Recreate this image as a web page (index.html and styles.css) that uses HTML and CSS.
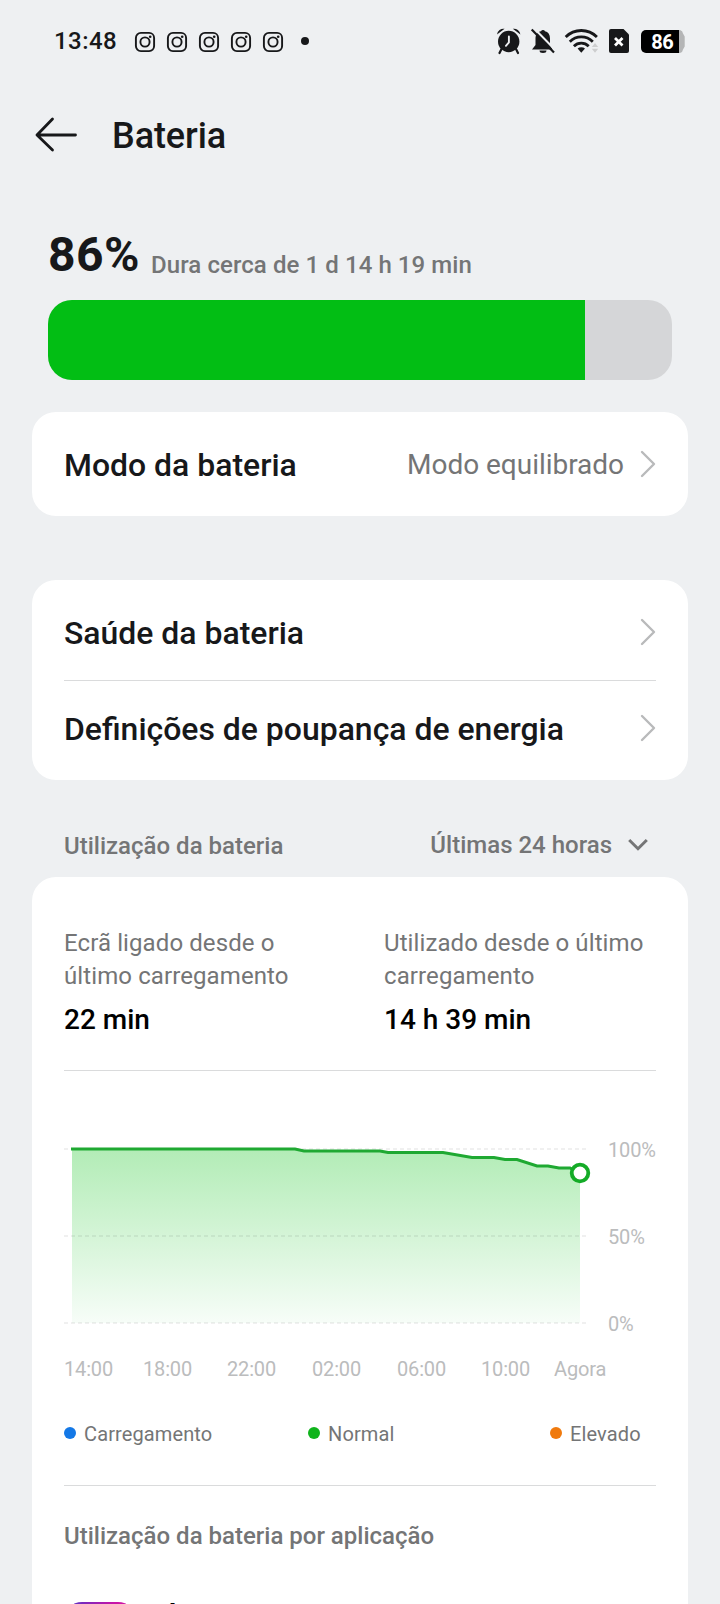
FILE: index.html
```html
<!DOCTYPE html>
<html lang="pt">
<head>
<meta charset="utf-8">
<title>Bateria</title>
<link rel="stylesheet" href="styles.css">
</head>
<body>
<svg width="0" height="0" class="defs">
  <symbol id="insta" viewBox="0 0 22 22"><rect x="1.9" y="1.9" width="18.2" height="18.2" rx="5" fill="none" stroke="#17181a" stroke-width="1.9"/><circle cx="11" cy="11" r="4.6" fill="none" stroke="#17181a" stroke-width="1.9"/><circle cx="16.2" cy="5.8" r="1.3" fill="#17181a"/></symbol>
  <symbol id="chev" viewBox="0 0 16 28"><path d="M2 2 14 14 2 26" fill="none" stroke="#b9babb" stroke-width="2.4" stroke-linecap="round" stroke-linejoin="round"/></symbol>
</svg>
<div class="screen">
  <div class="status">
    <span class="clock">13:48</span>
    <div class="notifs">
      <svg><use href="#insta"/></svg><svg><use href="#insta"/></svg><svg><use href="#insta"/></svg><svg><use href="#insta"/></svg><svg><use href="#insta"/></svg>
    </div>
    <span class="more"></span>
    <svg class="sys" width="192" height="32" viewBox="494 25 192 32">
      <!-- alarm -->
      <g fill="#17181a">
        <circle cx="508.700" cy="41.500" r="10.700"/>
        <path d="M497 34.500a6.500 6.500 0 0 1 7.600-5.700zM520.400 34.500a6.500 6.500 0 0 0-7.600-5.700z"/>
        <path d="M501.500 49l-2 4M516 49l2 4" stroke="#17181a" stroke-width="2.200" stroke-linecap="round"/>
        <path d="M508.900 36.500v6l-3 3.300" fill="none" stroke="#eef0f2" stroke-width="1.900" stroke-linecap="round"/>
      </g>
      <!-- muted bell -->
      <g fill="#17181a">
        <path d="M532 49.500h20.500l-2.500-4.500v-6.500c0-4-2-6.500-5-7.200a2.200 2.200 0 0 0-4 0c-3.200.7-5.500 3.200-5.500 7.200V45zM539.500 50.500h7a3.500 2.500 0 0 1-7 0z"/>
        <path d="M533.500 27.800l22.500 23" stroke="#eef0f2" stroke-width="2"/>
        <path d="M531.700 29.600l22.300 22.800" stroke="#17181a" stroke-width="2.200"/>
      </g>
      <!-- wifi -->
      <g fill="none" stroke="#17181a" stroke-width="2.800">
        <path d="M565.700 37a22 22 0 0 1 31.200 0"/>
        <path d="M569.800 41.700a16.300 16.300 0 0 1 23 0"/>
        <path d="M573.900 46.200a10.600 10.600 0 0 1 14.800 0"/>
        <path d="M581.300 52.700l-3.700-4.100a5.500 5.500 0 0 1 7.400 0z" fill="#17181a" stroke="none"/>
      </g>
      <path d="M591.800 47l3.200-4 3.200 4zM591.800 48.700l3.200 4 3.200-4z" fill="#cdcecf"/>
      <!-- SIM without service -->
      <path d="M611 29h12.500l5.500 5.500V51a2 2 0 0 1-2 2h-16a2 2 0 0 1-2-2V31a2 2 0 0 1 2-2z" fill="#17181a"/>
      <path d="M615 38l7.500 7.500M622.500 38l-7.500 7.500" stroke="#fff" stroke-width="2.800"/>
      <!-- battery -->
      <path d="M679 30h1a4 4 0 0 1 3 3.500l1.700 3v10l-1.700 3a4 4 0 0 1-3 3.500h-1z" fill="#b4b5b6"/>
      <path d="M646 30h33v23h-33a5 5 0 0 1-5-5V35a5 5 0 0 1 5-5z" fill="#000"/>
      <text x="662.300" y="48.900" class="batt">86</text>
    </svg>
  </div>

  <header class="bar">
    <svg width="44" height="36" viewBox="0 0 44 36"><path d="M40.500 18H2M17.500 2 2 18 17.500 33" fill="none" stroke="#17181a" stroke-width="2.800" stroke-linecap="round" stroke-linejoin="round"/></svg>
    <h1>Bateria</h1>
  </header>

  <section class="level">
    <div class="level-text"><strong>86%</strong><span>Dura cerca de 1 d 14 h 19 min</span></div>
    <div class="meter"><div class="meter-fill" style="width:86%"></div></div>
  </section>

  <section class="card mode">
    <div class="row"><span class="name">Modo da bateria</span><span class="value">Modo equilibrado</span><svg class="chev"><use href="#chev"/></svg></div>
  </section>

  <section class="card links">
    <div class="row"><span class="name">Saúde da bateria</span><svg class="chev"><use href="#chev"/></svg></div>
    <div class="row"><span class="name">Definições de poupança de energia</span><svg class="chev"><use href="#chev"/></svg></div>
  </section>

  <div class="section-head">
    <span class="usage-title">Utilização da bateria</span>
    <span class="range">Últimas 24 horas</span>
    <svg width="22" height="16" viewBox="0 0 22 16"><path d="M2.200 3 11 11.700 19.800 3" fill="none" stroke="#747576" stroke-width="3"/></svg>
  </div>

  <section class="card usage">
    <div class="stats">
      <div><p>Ecrã ligado desde o<br>último carregamento</p><b>22 min</b></div>
      <div><p>Utilizado desde o último<br>carregamento</p><b>14 h 39 min</b></div>
    </div>
    <svg class="chart" width="624" height="320" viewBox="64 1071 624 320">
      <defs><linearGradient id="fill" x1="0" y1="1149" x2="0" y2="1323" gradientUnits="userSpaceOnUse"><stop offset="0" stop-color="#b2ecb6"/><stop offset="1" stop-color="#f7fdf8"/></linearGradient></defs>
      <path d="M72 1149H295L304 1151H380L388 1152.500H443L472 1157.500H494L505 1159.500H517L537 1166H548L559 1168H570L580 1173V1323H72z" fill="url(#fill)"/>
      <path d="M64 1149H587M64 1236H587M64 1323H587" stroke="#000" stroke-opacity=".06" stroke-width="1.800" stroke-dasharray="4 3"/>
      <path d="M71 1149H295L304 1151H380L388 1152.500H443L472 1157.500H494L505 1159.500H517L537 1166H548L559 1168H570L580 1173" fill="none" stroke="#1fa932" stroke-width="3"/>
      <circle cx="580" cy="1173" r="8.300" fill="#fff" stroke="#14ab27" stroke-width="3.800"/>
      <g class="axis">
        <text x="608" y="1157">100%</text><text x="608" y="1244">50%</text><text x="608" y="1331">0%</text>
        <text x="64" y="1376">14:00</text><text x="143" y="1376">18:00</text><text x="227" y="1376">22:00</text><text x="312" y="1376">02:00</text><text x="397" y="1376">06:00</text><text x="481" y="1376">10:00</text><text x="554" y="1376">Agora</text>
      </g>
    </svg>
    <div class="legend">
      <span class="blue">Carregamento</span><span class="green">Normal</span><span class="orange">Elevado</span>
    </div>
    <h2>Utilização da bateria por aplicação</h2>
    <div class="app"><span class="app-icon"></span><span class="app-name">Instagram</span></div>
  </section>
</div>
</body>
</html>
```
FILE: styles.css
```css
* { box-sizing: border-box; margin: 0; padding: 0; }
body { font-family: Roboto, "Noto Sans", sans-serif; color: #17181a; background: #eef0f2; }
svg { display: block; flex: none; }
.defs { position: absolute; }
.screen { width: 720px; height: 1604px; overflow: hidden; background: #eef0f2; }

.status { display: flex; align-items: center; height: 82px; padding-left: 54px; }
.clock { width: 80px; font-size: 24px; font-weight: 500; letter-spacing: .45px; white-space: nowrap; }
.notifs { display: flex; gap: 10px; padding-top: 2px; }
.notifs svg { width: 22px; height: 22px; }
.more { width: 8px; height: 8px; margin-left: 17px; border-radius: 50%; background: #17181a; }
.sys { margin-left: 185px; }
.batt { font-size: 20px; font-weight: 700; fill: #fff; text-anchor: middle; letter-spacing: -.5px; }

.bar { display: flex; align-items: center; height: 106px; padding-left: 34.5px; }
.bar h1 { margin-left: 33.5px; padding-top: 2px; font-size: 36px; font-weight: 500; line-height: 40px; letter-spacing: -.1px; }

.level { height: 224px; padding: 39px 48px 0; }
.level-text { display: flex; align-items: flex-start; height: 73px; }
.level-text strong { width: 103px; font-size: 48px; font-weight: 700; line-height: 56px; letter-spacing: .5px; }
.level-text span { padding-top: 24px; font-size: 24px; line-height: 28px; font-weight: 500; color: #747576; letter-spacing: .08px; white-space: nowrap; }
.meter { height: 80px; border-radius: 24px; overflow: hidden; background: #d5d6d8; }
.meter-fill { height: 100%; background: #02be14; }

.card { margin: 0 32px; padding: 4px 32px; border-radius: 24px; background: #fff; }
.mode { height: 104px; }
.row { display: flex; align-items: center; height: 96px; }
.name { flex: 1; padding-top: 2px; font-size: 31.95px; font-weight: 500; white-space: nowrap; }
.value { margin-right: 16px; font-size: 28px; letter-spacing: -.03px; color: #747576; }
.chev { width: 16px; height: 28px; }
.links { height: 200px; margin-top: 64px; }
.links .row + .row { height: 95px; border-top: 1px solid #dadbdc; }

.section-head { display: flex; align-items: center; height: 97px; padding: 32px 71px 0 64px; font-size: 24px; font-weight: 500; color: #747576; }
.usage-title { flex: 1; padding-top: 2px; }
.range { margin-right: 15px; }

.usage { height: 760px; padding: 50px 0 0 32px; }
.stats { display: grid; grid-template-columns: 320px 272px; height: 144px; width: 592px; border-bottom: 1px solid #dadbdc; }
.stats p { font-size: 24px; line-height: 33px; letter-spacing: .1px; color: #747576; white-space: nowrap; }
.stats b { display: block; margin-top: 10px; font-size: 28px; line-height: 33px; font-weight: 500; color: #000; }
.axis { font-size: 20px; fill: #bbbcbd; letter-spacing: -.15px; }
.legend { display: grid; grid-template-columns: 244px 242px 106px; align-items: center; width: 592px; height: 95px; padding-bottom: 10px; border-bottom: 1px solid #dadbdc; font-size: 20px; line-height: 24px; letter-spacing: .12px; color: #747576; }
.legend span { display: flex; align-items: center; gap: 8px; padding-top: 2px; }
.legend span::before { content: ""; width: 12px; height: 12px; margin-bottom: 2px; border-radius: 50%; background: #1478e6; }
.legend .green::before { background: #10b41c; }
.legend .orange::before { background: #f07a0d; }
.usage h2 { margin-top: 33px; font-size: 24px; line-height: 34px; font-weight: 500; color: #747576; }
.app { display: flex; margin-top: 49px; }
.app-icon { width: 72px; height: 72px; border-radius: 18px; background: linear-gradient(90deg, #4a35c8, #c814a8 70%, #d41aa0); }
.app-name { margin-left: 32px; font-size: 32px; line-height: 24px; font-weight: 500; color: #000; }
```
